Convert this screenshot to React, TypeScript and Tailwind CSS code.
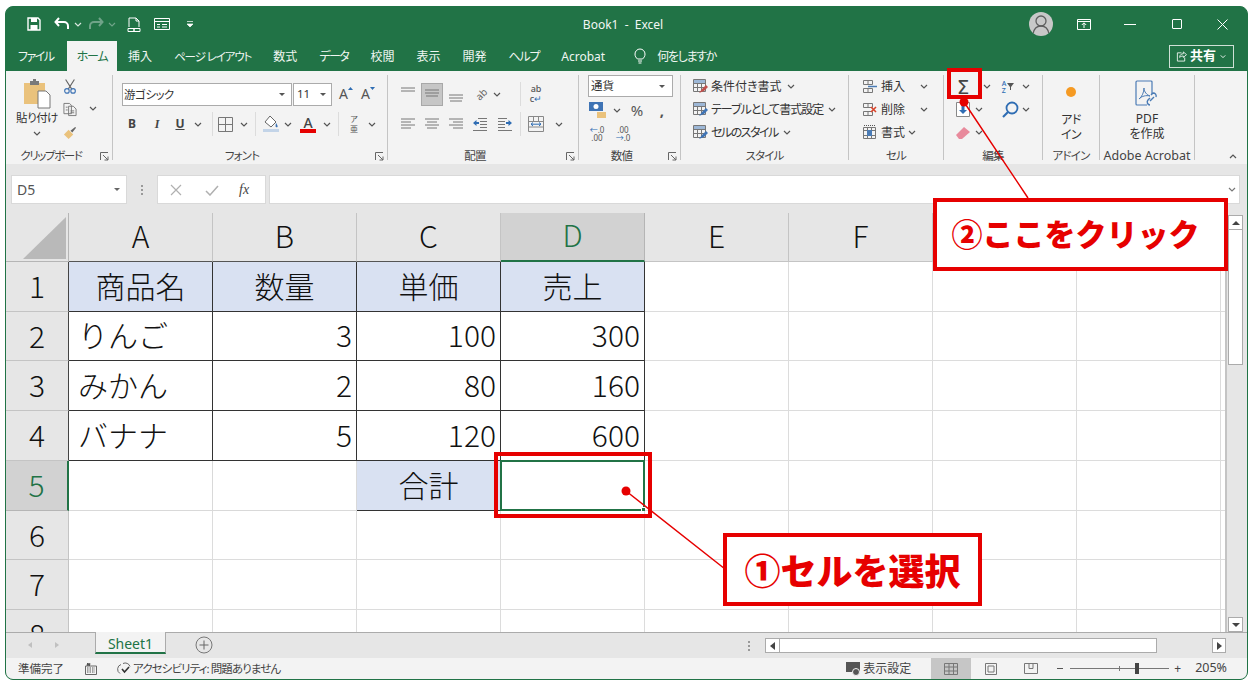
import type { ReactNode } from "react";

const GREEN = "#217346";

function Chev({ className = "", color = "#555" }: { className?: string; color?: string }) {
  return (
    <svg viewBox="0 0 8 5" className={`w-[8px] h-[5px] shrink-0 ${className}`}>
      <path d="M1 1l3 3 3-3" fill="none" stroke={color} strokeWidth="1.2" />
    </svg>
  );
}

function Launcher() {
  return (
    <div className="w-[16px] flex justify-center">
      <svg viewBox="0 0 9 9" className="w-[9px] h-[9px]">
        <path d="M.5 8V.5H8M3 3l5 5M8 4.5V8H4.5" fill="none" stroke="#666" strokeWidth="1" />
      </svg>
    </div>
  );
}

function Group({ w, label, labelClass = "text-[11.5px] tracking-[-0.8px]", launcher, children }: { w: string; label: string; labelClass?: string; launcher?: boolean; children: ReactNode }) {
  return (
    <div className={`${w} flex shrink-0 h-[93px]`}>
      <div className="flex-1 flex flex-col min-w-0">
        <div className="h-[75px]">{children}</div>
        <div className="h-[18px] pt-[2px] flex items-center">
          <div className={`flex-1 text-center leading-none text-[#444] whitespace-nowrap ${labelClass}`}>{label}</div>
          {launcher && <Launcher />}
        </div>
      </div>
      <div className="w-px h-[85px] mt-[4px] bg-[#c4c4c4]" />
    </div>
  );
}

function VSep({ className = "" }: { className?: string }) {
  return <div className={`w-px h-[24px] bg-[#dcdcdc] ${className}`} />;
}

// horizontal lines for the alignment buttons: [y, x1, x2]
function Lines({ rows }: { rows: [number, number, number][] }) {
  return (
    <svg viewBox="0 0 16 16" className="w-[16px] h-[16px]">
      {rows.map(([y, a, b], i) => (
        <path key={i} d={`M${a} ${y}H${b}`} stroke="#777" strokeWidth="1" />
      ))}
    </svg>
  );
}

function AlignBtn({ rows, active, className = "" }: { rows: [number, number, number][]; active?: boolean; className?: string }) {
  return (
    <div className={`w-[22px] h-[23px] flex items-center justify-center ${active ? "bg-[#c6c6c6] border border-[#a8a8a8]" : ""} ${className}`}>
      <Lines rows={rows} />
    </div>
  );
}

function RowIcon({ children }: { children: ReactNode }) {
  return <div className="w-[15px] h-[15px] shrink-0">{children}</div>;
}

function TableIcon({ accent }: { accent: string }) {
  return (
    <svg viewBox="0 0 15 15" className="w-[15px] h-[15px]">
      <path d="M.5.5h12v12H.5zM.5 4.5h12M.5 8.5h12M4.5.5v12M8.5.5v12" fill="none" stroke="#777" />
      <path d="M1 1h11v3H1z" fill="#9db7d6" />
      <path d="M6 14l3-4 4-4 2 2-4 4z" fill={accent} />
    </svg>
  );
}

function CellIcon({ kind }: { kind: "ins" | "del" | "fmt" }) {
  if (kind === "fmt") {
    return (
      <svg viewBox="0 0 15 15" className="w-[15px] h-[15px]">
        <path d="M1.5 2.5h12v11h-12zM1.5 5.5h12M1.5 10.5h12M5.5 2.5v11M9.5 2.5v11" fill="none" stroke="#777" />
        <path d="M5 5h5v6H5z" fill="#4a7bb5" />
        <path d="M2 .5h11" stroke="#555" strokeDasharray="1 1" />
      </svg>
    );
  }
  return (
    <svg viewBox="0 0 15 15" className="w-[15px] h-[15px]">
      <path d="M1.5 1.5h9v4h-9zM6 1.5v4M1.5 9.5h9v4h-9zM6 9.5v4" fill="none" stroke="#777" />
      {kind === "ins" ? <path d="M6 7.5h9" stroke="#4a7bb5" strokeWidth="1.5" /> : <path d="M9 5l5 5m0-5l-5 5" stroke="#d9442b" strokeWidth="1.6" />}
    </svg>
  );
}

function TitleBar() {
  return (
    <div className="h-[34px] flex items-center text-white shrink-0 relative">
      <svg viewBox="0 0 14 14" className="w-[14px] h-[14px] ml-[21px]">
        <path d="M1 1h10l2 2v10H1z" fill="none" stroke="#fff" strokeWidth="1.4" />
        <path d="M4 1h6v4H4zM3.5 8h7v5h-7z" fill="#fff" />
      </svg>
      <svg viewBox="0 0 16 14" className="w-[16px] h-[14px] ml-[13px]">
        <path d="M5 1L1.5 5 5 9M2 5h8a4 4 0 0 1 4 4v3" fill="none" stroke="#fff" strokeWidth="2" />
      </svg>
      <Chev color="#d9e7df" className="ml-[4px]" />
      <svg viewBox="0 0 16 14" className="w-[16px] h-[14px] ml-[6px]">
        <path d="M11 1l3.5 4L11 9M14 5H6a4 4 0 0 0-4 4v3" fill="none" stroke="#6fa388" strokeWidth="2" />
      </svg>
      <Chev color="#6fa388" className="ml-[4px]" />
      <svg viewBox="0 0 14 15" className="w-[14px] h-[15px] ml-[11px]">
        <path d="M2 10V1h7l3 3v6M9 1v3h3" fill="none" stroke="#fff" />
        <path d="M1 11.5h12v3H1z" fill="none" stroke="#fff" />
        <circle cx="7" cy="13" r="1" fill="#fff" />
      </svg>
      <svg viewBox="0 0 16 14" className="w-[16px] h-[14px] ml-[13px]">
        <path d="M.5 1.500h15v11H.5zM.5 4.500h15M3 7.500h3M8 7.500h5M3 10h3M8 10h5" fill="none" stroke="#fff" />
      </svg>
      <svg viewBox="0 0 8 8" className="w-[8px] h-[8px] ml-[16px]">
        <path d="M1 1.500h6M1 4h6l-3 3z" fill="#fff" stroke="#fff" strokeWidth=".7" />
      </svg>
      <div className="ml-[384px] w-[90px] pt-[2px] text-[12px] text-center text-[#f2f7f4] whitespace-pre">Book1  -  Excel</div>
      <div className="ml-[361px] w-[24px] h-[24px] rounded-full bg-[#c8c8c8] overflow-hidden flex justify-center">
        <svg viewBox="0 0 24 24" className="w-[24px] h-[24px]">
          <circle cx="12" cy="9" r="5" fill="none" stroke="#5f5f5f" strokeWidth="1.3" />
          <path d="M4 22c1-6 4-8 8-8s7 2 8 8" fill="none" stroke="#5f5f5f" strokeWidth="1.3" />
        </svg>
      </div>
      <svg viewBox="0 0 14 11" className="w-[14px] h-[11px] ml-[24px]">
        <path d="M.5.5h13v10H.5zM.5 2.500h13M7 9V4M4.800 6L7 3.800 9.200 6" fill="none" stroke="#fff" />
      </svg>
      <div className="ml-[33px] w-[12px] h-px bg-white" />
      <div className="ml-[36px] w-[10px] h-[10px] border border-white rounded-[1px]" />
      <svg viewBox="0 0 11 11" className="w-[11px] h-[11px] ml-[35px]">
        <path d="M.5.5l10 10m0-10l-10 10" stroke="#fff" />
      </svg>
    </div>
  );
}

const TABS = [
  { t: "挿入", c: "" },
  { t: "ページ レイアウト", c: "text-[11.5px] tracking-[-1.1px]" },
  { t: "数式", c: "" },
  { t: "データ", c: "tracking-[-1.5px]" },
  { t: "校閲", c: "" },
  { t: "表示", c: "" },
  { t: "開発", c: "" },
  { t: "ヘルプ", c: "tracking-[-1.2px]" },
  { t: "Acrobat", c: "" },
];

function Tabs() {
  return (
    <div className="h-[30px] flex items-center text-[12px] text-[#f0f6f2] shrink-0">
      <div className="w-[61px] pl-[12px] pt-[2px] whitespace-nowrap tracking-[-1.5px]">ファイル</div>
      <div className="w-[50px] h-full pt-[2px] bg-[#f3f3f3] text-[#217346] flex items-center justify-center tracking-[-1.2px]">ホーム</div>
      {TABS.map((tab) => (
        <div key={tab.t} className={`px-[11px] pt-[2px] whitespace-nowrap ${tab.c}`}>{tab.t}</div>
      ))}
      <svg viewBox="0 0 12 16" className="w-[12px] h-[16px] ml-[18px]">
        <path d="M3.500 11C2 9.500 1 8.500 1 6a5 5 0 0 1 10 0c0 2.500-1 3.500-2.500 5zM4 13h4M4.500 15h3" fill="none" stroke="#fff" />
      </svg>
      <div className="ml-[11px] pt-[2px] whitespace-nowrap tracking-[-1.3px]">何をしますか</div>
      <div className="ml-auto mr-[13px] w-[65px] h-[23px] border border-[#cfe0d6] flex items-center justify-center gap-[3px]">
        <svg viewBox="0 0 12 12" className="w-[11px] h-[11px]">
          <path d="M6 2H1.500v9h8V7M4 7c0-3 2-4 4-4V1l3.500 3L8 7V5.500C6 5.500 5 6 4 7z" fill="none" stroke="#fff" strokeWidth=".9" />
        </svg>
        <span className="font-bold text-[13px] text-white">共有</span>
        <Chev color="#fff" className="scale-75" />
      </div>
    </div>
  );
}

function Clipboard() {
  return (
    <Group w="w-[107px]" label="クリップボード" labelClass="text-[11.5px] tracking-[-1.4px]" launcher>
      <div className="flex h-full">
        <div className="w-[54px] pl-[8px] flex flex-col items-center pt-[8px]">
          <svg viewBox="0 0 28 30" className="w-[28px] h-[30px] shrink-0">
            <path d="M1 4h21v21H1z" fill="#eac27c" />
            <path d="M7 2h9v4H7z" fill="#7a7a7a" />
            <path d="M10 0h3v3h-3z" fill="#7a7a7a" />
            <path d="M15 12h8l4 4v13H15z" fill="#fff" stroke="#777" />
          </svg>
          <div className="text-[11.5px] leading-[14px] mt-[2px] text-[#333] whitespace-nowrap tracking-[-0.5px]">貼り付け</div>
          <Chev className="mt-[6px]" />
        </div>
        <div className="w-[20px] flex flex-col pt-[4px] items-center">
          <div className="h-[23px] flex items-center">
            <svg viewBox="0 0 16 18" className="w-[14px] h-[17px]">
              <path d="M3 1l7 11M13 1L6 12" stroke="#666" strokeWidth="1.3" />
              <circle cx="4.500" cy="14" r="2.600" fill="none" stroke="#3f74b5" strokeWidth="1.300" />
              <circle cx="11.500" cy="14" r="2.600" fill="none" stroke="#3f74b5" strokeWidth="1.300" />
            </svg>
          </div>
          <div className="h-[23px] flex items-center">
            <svg viewBox="0 0 15 15" className="w-[14px] h-[15px]">
              <path d="M1 1h6l2 2v9H1zM6 4h5l3 3v7H6zM3 5h2M3 8h2M8 9h4M8 11h4" fill="#f3f3f3" stroke="#777" />
            </svg>
          </div>
          <div className="h-[23px] flex items-center">
            <svg viewBox="0 0 15 15" className="w-[14px] h-[14px]">
              <path d="M1 9l5-5 5 5-5 5z" fill="#eac27c" />
              <path d="M8 5l5-4 1 1-4 5z" fill="#666" />
            </svg>
          </div>
        </div>
        <Chev className="ml-[9px] mt-[35px]" />
      </div>
    </Group>
  );
}

function FontGroup() {
  return (
    <Group w="w-[275px]" label="フォント" launcher>
      <div className="pt-[11px] pl-[9px]">
        <div className="flex items-center h-[24px]">
          <div className="w-[170px] h-[23px] bg-white border border-[#ababab] flex items-center px-[1px] text-[11.5px] text-[#333] tracking-[-0.5px]">
            <span className="pt-[2px]">游ゴシック</span>
            <svg viewBox="0 0 6 3" className="w-[6px] h-[3px] ml-auto mr-[5px]"><path d="M0 0h6L3 3z" fill="#555" /></svg>
          </div>
          <div className="w-[39px] h-[23px] ml-[1px] bg-white border border-[#ababab] flex items-center pl-[3px] text-[11.5px] text-[#333]">
            11
            <svg viewBox="0 0 6 3" className="w-[6px] h-[3px] ml-auto mr-[5px]"><path d="M0 0h6L3 3z" fill="#555" /></svg>
          </div>
          <div className="w-[22px] ml-[3px] flex justify-center items-start">
            <span className="text-[14px] leading-[16px] text-[#555]">A</span>
            <svg viewBox="0 0 5 3" className="w-[5px] h-[3px] mt-[1px]"><path d="M0 3l2.500-3L5 3z" fill="#2f6db3" /></svg>
          </div>
          <div className="w-[22px] flex justify-center items-start">
            <span className="text-[14px] leading-[16px] text-[#555]">A</span>
            <svg viewBox="0 0 5 3" className="w-[5px] h-[3px] mt-[1px]"><path d="M0 0h5L2.500 3z" fill="#2f6db3" /></svg>
          </div>
        </div>
        <div className="flex items-center h-[24px] mt-[6px] text-[12px] text-[#444]">
          <div className="w-[20px] text-center font-bold">B</div>
          <div className="w-[20px] ml-[5px] text-center italic font-bold [font-family:'Liberation_Serif',serif]">I</div>
          <div className="w-[20px] ml-[3px] text-center font-bold underline">U</div>
          <Chev className="ml-[4px]" />
          <VSep className="ml-[10px]" />
          <svg viewBox="0 0 15 15" className="w-[15px] h-[15px] ml-[5px]">
            <path d="M.5.5h14v14H.5zM7.500.5v14M.5 7.500h14" fill="none" stroke="#777" />
          </svg>
          <Chev className="ml-[7px]" />
          <VSep className="ml-[7px]" />
          <svg viewBox="0 0 18 18" className="w-[18px] h-[18px] ml-[6px]">
            <path d="M8 1l6 6-5 5-6-5z" fill="#fff" stroke="#666" />
            <path d="M14 8c1 1.500 2 3 1.500 4-.5.5-2 .5-2-1z" fill="#3f74b5" />
            <path d="M1 14h16v3H1z" fill="#c3d4e8" />
          </svg>
          <Chev className="ml-[4px]" />
          <div className="w-[18px] ml-[7px] flex flex-col items-center">
            <span className="text-[14px] leading-[13px] font-medium text-[#444]">A</span>
            <div className="w-[16px] h-[4px] bg-[#e60000]" />
          </div>
          <Chev className="ml-[6px]" />
          <VSep className="ml-[7px]" />
          <div className="w-[18px] ml-[6px] flex flex-col items-center text-[8px] leading-[10px] text-[#555]">
            <span>ア</span>
            <span>亜</span>
          </div>
          <Chev className="ml-[5px]" />
        </div>
      </div>
    </Group>
  );
}

const TOP: [number, number, number][] = [[2, 1, 15], [5, 1, 15]];
const MID: [number, number, number][] = [[4, 1, 15], [7, 1, 15], [10, 2, 14]];
const BOT: [number, number, number][] = [[9, 1, 15], [12, 1, 15], [15, 2, 14]];
const LEFT: [number, number, number][] = [[3, 1, 15], [6, 1, 11], [9, 1, 15], [12, 1, 11]];
const CENTER: [number, number, number][] = [[3, 1, 15], [6, 3, 13], [9, 1, 15], [12, 3, 13]];
const RIGHT: [number, number, number][] = [[3, 1, 15], [6, 5, 15], [9, 1, 15], [12, 5, 15]];

function IndentIcon({ flip }: { flip?: boolean }) {
  return (
    <svg viewBox="0 0 16 15" className={`w-[16px] h-[15px] ${flip ? "-scale-x-100" : ""}`}>
      <path d="M6 1.500h9M8 4.500h7M8 7.500h7M8 10.500h7M1 13.500h14" stroke="#777" fill="none" />
      <path d="M1 6l3.500-3v2H7v2H4.500v2z" fill="#2f6db3" />
    </svg>
  );
}

function Alignment() {
  return (
    <Group w="w-[191px]" label="配置" launcher>
      <div className="pt-[11px] pl-[9px]">
        <div className="flex items-center h-[24px]">
          <AlignBtn rows={TOP} />
          <AlignBtn rows={MID} active className="ml-[2px]" />
          <AlignBtn rows={BOT} className="ml-[2px]" />
          <div className="w-[18px] ml-[5px] text-[10px] leading-none text-[#666] -rotate-45 text-center">ab</div>
          <Chev className="ml-[3px]" />
          <VSep className="ml-[19px]" />
          <div className="w-[18px] ml-[6px] flex flex-col items-center text-[9px] leading-[10px] font-medium text-[#555]">
            <span>ab</span>
            <span>c<span className="text-[#2f6db3]">↵</span></span>
          </div>
        </div>
        <div className="flex items-center h-[24px] mt-[6px]">
          <AlignBtn rows={LEFT} />
          <AlignBtn rows={CENTER} className="ml-[2px]" />
          <AlignBtn rows={RIGHT} className="ml-[2px]" />
          <div className="w-[22px] ml-[2px] flex justify-center"><IndentIcon /></div>
          <div className="w-[22px] ml-[3px] flex justify-center"><IndentIcon flip /></div>
          <VSep className="ml-[4px]" />
          <svg viewBox="0 0 16 16" className="w-[16px] h-[16px] ml-[7px]">
            <path d="M.5.5h15v15H.5zM.5 5.500h15M.5 11h15M5.500.5v5M10.500.5v5" fill="none" stroke="#888" />
            <path d="M3 8.200h10M5 6.500L3 8.200 5 10M11 6.500l2 1.700-2 1.800" fill="none" stroke="#2f6db3" />
          </svg>
          <Chev className="ml-[11px]" />
        </div>
      </div>
    </Group>
  );
}

function NumberGroup() {
  return (
    <Group w="w-[102px]" label="数値" launcher>
      <div className="pt-[4px] pl-[9px] text-[#444]">
        <div className="w-[85px] h-[22px] bg-white border border-[#ababab] flex items-center px-[2px] text-[11.5px] text-[#333]">
          通貨
          <svg viewBox="0 0 6 3" className="w-[6px] h-[3px] ml-auto mr-[5px]"><path d="M0 0h6L3 3z" fill="#555" /></svg>
        </div>
        <div className="flex items-center h-[24px] mt-[1px]">
          <svg viewBox="0 0 20 18" className="w-[20px] h-[18px]">
            <path d="M1 1h14v9H1z" fill="#3f74b5" />
            <circle cx="8" cy="5.500" r="2.500" fill="#fff" />
            <path d="M9 11h9v6H9z" fill="#eac27c" />
          </svg>
          <Chev className="ml-[5px]" />
          <div className="w-[18px] ml-[7px] text-center text-[15px] leading-none text-[#555]">%</div>
          <div className="w-[16px] ml-[8px] text-center text-[15px] leading-none font-bold text-[#555]">,</div>
        </div>
        <div className="flex items-center h-[23px] text-[8px] leading-[8px] text-[#555]">
          <div className="w-[20px] -ml-[1px] flex flex-col items-center">
            <span><span className="text-[#2f6db3]">←</span>.0</span>
            <span>.00</span>
          </div>
          <div className="w-[20px] ml-[6px] flex flex-col items-center">
            <span>.00</span>
            <span><span className="text-[#2f6db3]">→</span>.0</span>
          </div>
        </div>
      </div>
    </Group>
  );
}

const STYLE_ROWS = [
  { t: "条件付き書式", c: "", accent: "#c0504d" },
  { t: "テーブルとして書式設定", c: "tracking-[-1px]", accent: "#3f74b5" },
  { t: "セルのスタイル", c: "tracking-[-1.5px]", accent: "#3f74b5" },
];

function StyleGroup() {
  return (
    <Group w="w-[168px]" label="スタイル">
      <div className="pt-[4px] pl-[12px] text-[12px] text-[#333]">
        {STYLE_ROWS.map((s) => (
          <div key={s.t} className="h-[23px] flex items-center">
            <RowIcon><TableIcon accent={s.accent} /></RowIcon>
            <span className={`ml-[3px] whitespace-nowrap ${s.c}`}>{s.t}</span>
            <Chev className="ml-[5px]" />
          </div>
        ))}
      </div>
    </Group>
  );
}

function CellGroup() {
  return (
    <Group w="w-[95px]" label="セル">
      <div className="pt-[4px] pl-[13px] text-[12px] text-[#333]">
        <div className="h-[23px] flex items-center">
          <RowIcon><CellIcon kind="ins" /></RowIcon>
          <span className="ml-[4px]">挿入</span>
          <Chev className="ml-[15px]" />
        </div>
        <div className="h-[23px] flex items-center">
          <RowIcon><CellIcon kind="del" /></RowIcon>
          <span className="ml-[4px]">削除</span>
          <Chev className="ml-[15px]" />
        </div>
        <div className="h-[23px] flex items-center">
          <RowIcon><CellIcon kind="fmt" /></RowIcon>
          <span className="ml-[4px]">書式</span>
          <Chev className="ml-[3px]" />
        </div>
      </div>
    </Group>
  );
}

function EditGroup() {
  return (
    <Group w="w-[99px]" label="編集">
      <div className="pt-[4px] pl-[9px] text-[#444]">
        <div className="h-[23px] flex items-center">
          <div className="w-[20px] text-center text-[20px] leading-none text-[#444] [font-family:'DejaVu_Sans',sans-serif]">Σ</div>
          <Chev className="ml-[10px]" />
          <div className="w-[18px] ml-[8px] flex items-center justify-center gap-[1px]">
            <div className="flex flex-col text-[7px] leading-[7px] text-[#2f6db3] font-medium">
              <span>A</span>
              <span>Z</span>
            </div>
            <svg viewBox="0 0 7 7" className="w-[7px] h-[7px]"><path d="M0 0h7L4 4v3H3V4z" fill="#555" /></svg>
          </div>
          <Chev className="ml-[5px]" />
        </div>
        <div className="h-[23px] flex items-center">
          <div className="w-[20px] flex justify-center">
            <svg viewBox="0 0 14 15" className="w-[14px] h-[15px]">
              <path d="M.5.5h13v14H.5z" fill="#fff" stroke="#888" />
              <path d="M5.500 3h3v5H11l-4 4-4-4h2.500z" fill="#2f6db3" />
            </svg>
          </div>
          <Chev className="ml-[2px]" />
          <svg viewBox="0 0 18 18" className="w-[18px] h-[18px] ml-[18px]">
            <circle cx="11" cy="7" r="5.500" fill="none" stroke="#2f6db3" strokeWidth="1.800" />
            <path d="M7 11l-5 5" stroke="#2f6db3" strokeWidth="2.200" />
          </svg>
          <Chev className="ml-[3px]" />
        </div>
        <div className="h-[23px] flex items-center">
          <div className="w-[20px] flex justify-center">
            <svg viewBox="0 0 16 14" className="w-[16px] h-[14px]">
              <path d="M1 9l8-8 6 5-8 7H4z" fill="#e88a9c" />
            </svg>
          </div>
          <Chev className="ml-[2px]" />
        </div>
      </div>
    </Group>
  );
}

function AddinGroup() {
  return (
    <Group w="w-[57px]" label="アドイン">
      <div className="flex flex-col items-center pt-[16px] text-[12px] leading-[15px] text-[#333]">
        <div className="w-[10px] h-[10px] rounded-full bg-[#f59a23]" />
        <div className="mt-[15px] flex flex-col items-center tracking-[-0.5px]">
          <span>アド</span>
          <span>イン</span>
        </div>
      </div>
    </Group>
  );
}

function AcrobatGroup() {
  return (
    <Group w="w-[95px]" label="Adobe Acrobat" labelClass="text-[12.5px]">
      <div className="flex flex-col items-center pt-[9px] text-[12px] leading-[15px] text-[#333]">
        <svg viewBox="0 0 28 28" className="w-[28px] h-[28px]">
          <path d="M19 14V2a1 1 0 0 0-1-1H4a1 1 0 0 0-1 1v22a1 1 0 0 0 1 1h10" fill="none" stroke="#4a7bb5" strokeWidth="1.200" />
          <path d="M6 19c3-2 5-7 5-11 0 4 3 7 6 8-4-1-8 0-11 3z" fill="none" stroke="#4a7bb5" />
          <path d="M17 25a3 3 0 0 1-2-5l2-2M23 17a3 3 0 0 0-3-4l-2 2M17 21l4-4" fill="none" stroke="#4a7bb5" strokeWidth="1.400" />
        </svg>
        <div className="mt-[3px] flex flex-col items-center">
          <span>PDF</span>
          <span>を作成</span>
        </div>
      </div>
    </Group>
  );
}

function Ribbon() {
  return (
    <div className="h-[93px] bg-[#f3f3f3] flex shrink-0">
      <Clipboard />
      <FontGroup />
      <Alignment />
      <NumberGroup />
      <StyleGroup />
      <CellGroup />
      <EditGroup />
      <AddinGroup />
      <AcrobatGroup />
      <div className="flex-1 flex items-end justify-end pr-[10px] pb-[5px]">
        <Chev className="rotate-180" />
      </div>
    </div>
  );
}

function FormulaBar() {
  return (
    <div className="h-[29px] flex items-stretch pl-[5px] pr-[7px] shrink-0 text-[#555]">
      <div className="w-[116px] bg-white border border-[#d9d9d9] flex items-center pl-[5px] text-[14px]">
        D5
        <svg viewBox="0 0 6 3" className="w-[6px] h-[3px] ml-auto mr-[6px]"><path d="M0 0h6L3 3z" fill="#666" /></svg>
      </div>
      <div className="w-[30px] flex flex-col items-center justify-center gap-[2px]">
        <div className="w-[2px] h-[2px] bg-[#999]" />
        <div className="w-[2px] h-[2px] bg-[#999]" />
        <div className="w-[2px] h-[2px] bg-[#999]" />
      </div>
      <div className="w-[109px] bg-white border border-[#d9d9d9] flex items-center pl-[12px]">
        <svg viewBox="0 0 12 12" className="w-[12px] h-[12px]"><path d="M1 1l10 10m0-10L1 11" stroke="#b0b0b0" strokeWidth="1.200" /></svg>
        <svg viewBox="0 0 14 12" className="w-[14px] h-[12px] ml-[23px]"><path d="M1 7l4 4 8-9" fill="none" stroke="#b0b0b0" strokeWidth="1.500" /></svg>
        <span className="ml-[20px] text-[14px] italic text-[#444] [font-family:'Liberation_Serif',serif]">fx</span>
      </div>
      <div className="flex-1 ml-[3px] bg-white border border-[#d9d9d9] flex items-center justify-end pr-[3px]">
        <Chev color="#777" />
      </div>
    </div>
  );
}

const COLS = ["A", "B", "C", "D", "E", "F", "G", "H"];

type Cell = { t?: string; al?: "l" | "c" | "r"; blue?: boolean; box?: boolean };

const DATA: Cell[][] = [
  [{ t: "商品名", al: "c", blue: true, box: true }, { t: "数量", al: "c", blue: true, box: true }, { t: "単価", al: "c", blue: true, box: true }, { t: "売上", al: "c", blue: true, box: true }],
  [{ t: "りんご", al: "l", box: true }, { t: "3", al: "r", box: true }, { t: "100", al: "r", box: true }, { t: "300", al: "r", box: true }],
  [{ t: "みかん", al: "l", box: true }, { t: "2", al: "r", box: true }, { t: "80", al: "r", box: true }, { t: "160", al: "r", box: true }],
  [{ t: "バナナ", al: "l", box: true }, { t: "5", al: "r", box: true }, { t: "120", al: "r", box: true }, { t: "600", al: "r", box: true }],
  [{}, {}, { t: "合計", al: "c", blue: true, box: true }, {}],
];

function SheetGrid() {
  return (
    <div className="w-[1219px] h-[419px] overflow-hidden grid grid-cols-[63px_repeat(8,144px)_4px] grid-rows-[49px_50px_49px_50px_50px_50px_49px_50px_50px] bg-white text-[30px] text-[#111] font-light [font-family:'Noto_Sans_CJK_JP',sans-serif] [font-feature-settings:normal]">
      <div className="bg-[#e6e6e6] border-r border-b border-[#b5b5b5]">
        <svg viewBox="0 0 62 49" className="w-[62px] h-[49px]"><path d="M17 46L60 4v42z" fill="#b9b9b9" /></svg>
      </div>
      {COLS.map((c) => (
        <div
          key={c}
          className={`flex items-center justify-center pb-[4px] border-r ${
            c === "D"
              ? "bg-[#d2d2d2] text-[#217346] border-b-2 border-b-[#217346] border-r-[#b5b5b5]"
              : c < "D"
              ? "bg-[#e6e6e6] border-b border-b-[#555] border-r-[#c4c4c4]"
              : "bg-[#e6e6e6] border-b border-[#c4c4c4]"
          }`}
        >
          {c}
        </div>
      ))}
      <div className="bg-[#e6e6e6]" />
      {[1, 2, 3, 4, 5, 6, 7, 8].map((r) => {
        const row = DATA[r - 1] ?? [];
        return [
          <div
            key={`h${r}`}
            className={`flex items-center justify-center pb-[2px] border-b ${
              r === 5
                ? "bg-[#d2d2d2] text-[#217346] border-r-2 border-r-[#217346] border-b-[#b5b5b5]"
                : r < 5
                ? "bg-[#e6e6e6] border-r border-r-[#444] border-b-[#c4c4c4]"
                : "bg-[#e6e6e6] border-r border-[#c4c4c4]"
            }`}
          >
            {r}
          </div>,
          ...COLS.map((c, i) => {
            const cell = row[i] ?? {};
            const selected = r === 5 && c === "D";
            return (
              <div
                key={`${c}${r}`}
                className={`relative flex items-center whitespace-nowrap pb-[3px] border-r border-b ${
                  cell.box ? "border-[#333]" : r === 5 && c < "C" ? "border-b-[#d9d9d9] border-r-[#d9d9d9]" : "border-[#dcdcdc]"
                } ${r === 4 && c < "C" ? "border-b-[#333]" : ""} ${r === 5 && c === "B" ? "border-r-[#333]" : ""} ${cell.blue ? "bg-[#d9e1f2]" : ""} ${
                  cell.al === "c" ? "justify-center" : cell.al === "r" ? "justify-end pr-[4px]" : "pl-[9px]"
                }`}
              >
                {cell.t}
                {selected && (
                  <div className="absolute -left-[1px] -top-[1px] -right-[1px] -bottom-[1px] border-2 border-[#217346]">
                    <div className="absolute -right-[3px] -bottom-[3px] w-[5px] h-[5px] bg-[#217346] border border-white" />
                  </div>
                )}
              </div>
            );
          }),
          <div key={`x${r}`} className="border-b border-[#dcdcdc]" />,
        ];
      })}
    </div>
  );
}

function ArrowBtn({ dir, className = "" }: { dir: "u" | "d" | "l" | "r"; className?: string }) {
  const d = { u: "M0 4l4-4 4 4z", d: "M0 0h8L4 4z", l: "M5 0v8L0 4z", r: "M0 0v8l5-4z" }[dir];
  const box = dir === "u" || dir === "d" ? "0 0 8 4" : "0 0 5 8";
  const size = dir === "u" || dir === "d" ? "w-[8px] h-[4px]" : "w-[5px] h-[8px]";
  return (
    <div className={`flex items-center justify-center bg-white border border-[#ababab] ${className}`}>
      <svg viewBox={box} className={size}><path d={d} fill="#444" /></svg>
    </div>
  );
}

function VScroll() {
  return (
    <div className="flex-1 h-[419px] bg-[#e6e6e6] border-l-2 border-[#c4c4c4] pl-[1px] pt-[2px] flex flex-col">
      <ArrowBtn dir="u" className="w-[15px] h-[15px]" />
      <div className="w-[15px] h-[135px] bg-white border border-t-0 border-[#ababab]" />
      <div className="flex-1" />
      <ArrowBtn dir="d" className="w-[15px] h-[15px]" />
    </div>
  );
}

function SheetTabs() {
  return (
    <div className="h-[26px] bg-[#e6e6e6] border-t border-[#ababab] flex items-start shrink-0">
      <svg viewBox="0 0 4 6" className="w-[4px] h-[6px] ml-[22px] mt-[9px]"><path d="M4 0v6L0 3z" fill="#c0c0c0" /></svg>
      <svg viewBox="0 0 4 6" className="w-[4px] h-[6px] ml-[23px] mt-[9px]"><path d="M0 0v6l4-3z" fill="#c0c0c0" /></svg>
      <div className="ml-[36px] w-[71px] h-[22px] -mt-px pt-[3px] bg-[#f3f3f3] border-x border-[#ababab] border-b-2 border-b-[#217346] flex items-center justify-center text-[14px] text-[#217346]">
        Sheet1
      </div>
      <svg viewBox="0 0 18 18" className="w-[18px] h-[18px] ml-[29px] mt-[3px]">
        <circle cx="9" cy="9" r="8" fill="none" stroke="#777" />
        <path d="M9 4.500v9M4.500 9h9" stroke="#666" />
      </svg>
      <div className="ml-[535px] mt-[8px] flex flex-col gap-[2px]">
        <div className="w-[2px] h-[2px] bg-[#999]" />
        <div className="w-[2px] h-[2px] bg-[#999]" />
        <div className="w-[2px] h-[2px] bg-[#999]" />
      </div>
      <ArrowBtn dir="l" className="w-[15px] h-[15px] ml-[15px] mt-[5px]" />
      <div className="w-[377px] h-[15px] mt-[5px] bg-white border border-l-0 border-[#ababab]" />
      <ArrowBtn dir="r" className="w-[14px] h-[15px] ml-[55px] mt-[5px]" />
    </div>
  );
}

function StatusBar() {
  return (
    <div className="h-[21px] bg-[#f3f3f3] flex items-center text-[11.5px] text-[#444] shrink-0">
      <span className="ml-[12px] whitespace-nowrap">準備完了</span>
      <svg viewBox="0 0 12 12" className="w-[12px] h-[12px] ml-[21px]">
        <path d="M.5 3h11v8.500H.5z" fill="none" stroke="#666" />
        <path d="M2 .5h3v2H2zM2 5h8M2 7h8M2 9h8" fill="#555" stroke="#555" strokeDasharray="1.500 1" />
      </svg>
      <svg viewBox="0 0 15 14" className="w-[15px] h-[14px] ml-[19px]">
        <path d="M5 2.500a5 5 0 0 0-1 9M7 1.500a5 5 0 0 1 7 3" fill="none" stroke="#666" />
        <path d="M6 7l2.500 3L13 5" fill="none" stroke="#333" strokeWidth="1.600" />
      </svg>
      <span className="ml-[2px] whitespace-nowrap tracking-[-0.9px]">アクセシビリティ: 問題ありません</span>
      <svg viewBox="0 0 16 14" className="w-[16px] h-[14px] ml-auto">
        <path d="M0 0h14v10H0z" fill="#555" />
        <circle cx="10" cy="10" r="3.500" fill="#555" stroke="#f3f3f3" />
      </svg>
      <span className="ml-[1px] text-[12px] whitespace-nowrap">表示設定</span>
      <div className="ml-[20px] w-[40px] h-[21px] bg-[#c6c6c6] flex items-center justify-center">
        <svg viewBox="0 0 14 12" className="w-[14px] h-[12px]">
          <path d="M.5.5h13v11H.5zM.5 4h13M.5 8h13M5 .5v11M9.500.5v11" fill="none" stroke="#777" />
        </svg>
      </div>
      <svg viewBox="0 0 12 12" className="w-[12px] h-[12px] ml-[14px]">
        <path d="M.5.5h11v11H.5zM3 3h6v6H3z" fill="none" stroke="#777" />
      </svg>
      <svg viewBox="0 0 14 11" className="w-[14px] h-[11px] ml-[27px]">
        <path d="M.5.5h13v10H.5zM5 .5v5h4v-5" fill="none" stroke="#777" />
      </svg>
      <div className="ml-[19px] w-[6px] h-px bg-[#555]" />
      <div className="ml-[7px] w-[99px] h-px bg-[#777] flex items-center">
        <div className="ml-[49px] w-px h-[5px] bg-[#777]" />
        <div className="ml-[15px] w-[4px] h-[11px] bg-[#444]" />
      </div>
      <span className="ml-[5px] text-[12px] leading-none">+</span>
      <span className="ml-[14px] mr-[20px] text-[12.5px] whitespace-nowrap">205%</span>
    </div>
  );
}

function Callouts() {
  return (
    <>
      <svg viewBox="0 0 1254 686" className="absolute left-0 top-0 w-[1254px] h-[686px] pointer-events-none">
        <path d="M964 102L1028 198M626 491L725 569" stroke="#e60000" strokeWidth="1.500" />
        <circle cx="964" cy="102" r="4.500" fill="#e60000" />
        <circle cx="626" cy="491" r="4.500" fill="#e60000" />
      </svg>
      <div className="absolute left-[947px] top-[68px] w-[35px] h-[31px] border-[4px] border-[#e60000]" />
      <div className="absolute left-[494px] top-[452px] w-[158px] h-[66px] border-[4px] border-[#e60000]" />
      <div className="absolute left-[933px] top-[198px] w-[295px] h-[73px] border-[4px] border-[#e60000] bg-white flex items-center justify-center pr-[10px] pb-[3px] text-[31px] font-black text-[#e60000] [font-family:'Noto_Sans_CJK_JP',sans-serif] [font-feature-settings:normal] whitespace-nowrap">
        ②ここをクリック
      </div>
      <div className="absolute left-[723px] top-[533px] w-[259px] h-[73px] border-[4px] border-[#e60000] bg-white flex items-center justify-center pb-[2px] text-[36px] font-black text-[#e60000] [font-family:'Noto_Sans_CJK_JP',sans-serif] [font-feature-settings:normal] whitespace-nowrap">
        ①セルを選択
      </div>
    </>
  );
}

export default function App() {
  return (
    <div className="relative w-[1254px] h-[686px] bg-white overflow-hidden pt-[6px] pl-[5px] [font-family:'Noto_Sans','Noto_Sans_CJK_JP',sans-serif] [font-feature-settings:'palt']">
      <div className="w-[1243px] h-[674px] rounded-[8px] border border-[#217346] overflow-hidden flex flex-col bg-[#217346]" style={{ borderColor: GREEN }}>
        <TitleBar />
        <Tabs />
        <Ribbon />
        <div className="h-[11px] bg-[#e6e6e6] shrink-0" />
        <div className="bg-[#e6e6e6] shrink-0"><FormulaBar /></div>
        <div className="h-[9px] bg-[#e6e6e6] shrink-0" />
        <div className="flex shrink-0">
          <SheetGrid />
          <VScroll />
        </div>
        <SheetTabs />
        <StatusBar />
      </div>
      <Callouts />
    </div>
  );
}
